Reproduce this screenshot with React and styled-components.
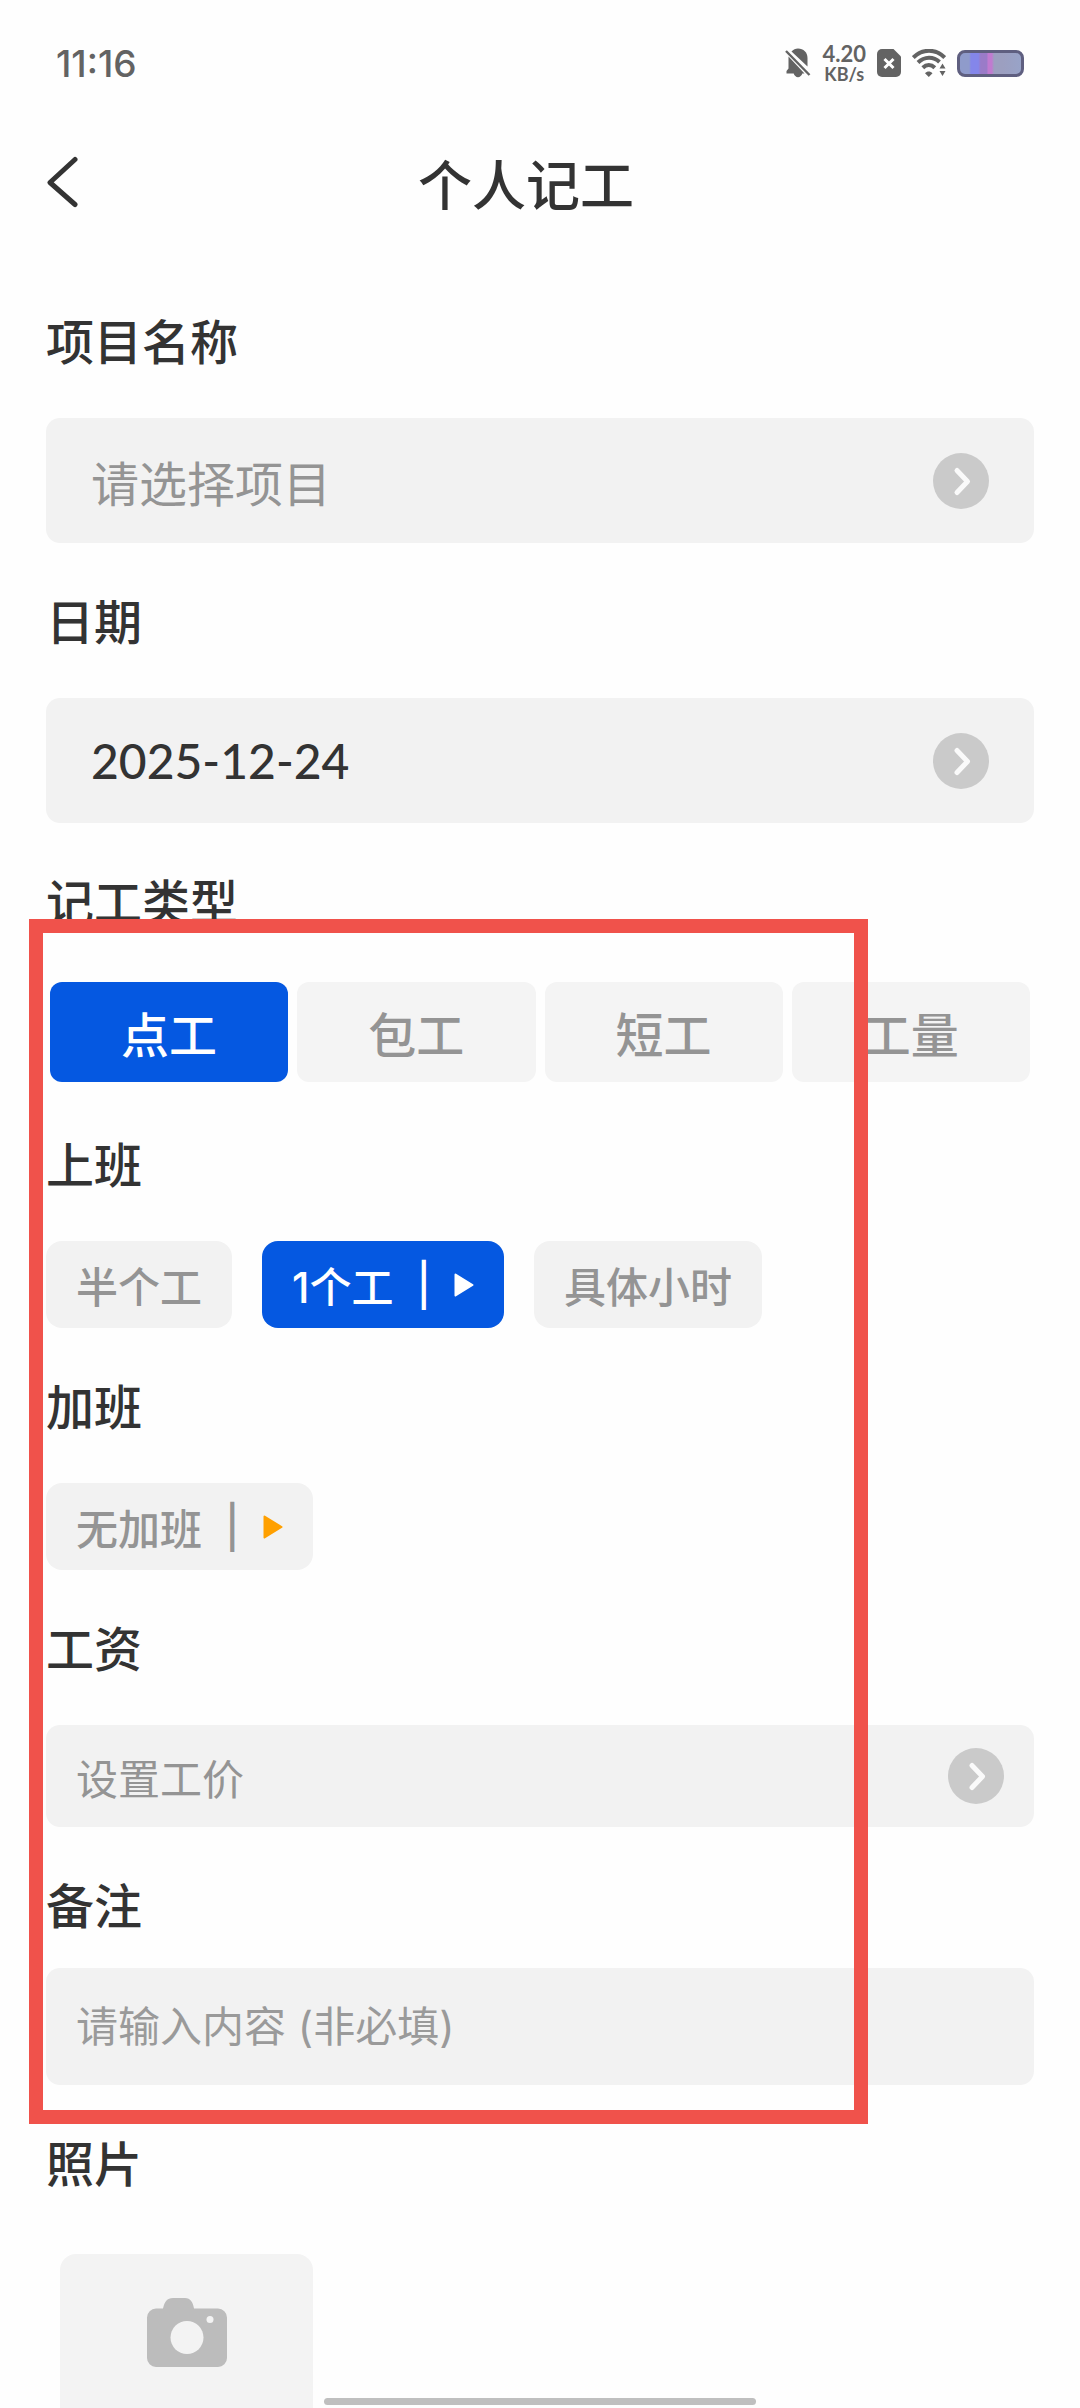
import React, { useState } from "react";
import styled, { createGlobalStyle } from "styled-components";

const workTypes = ["点工", "包工", "短工", "工量"];
const shifts = [
  { label: "半个工" },
  { label: "1个工", more: true },
  { label: "具体小时" },
];

const StatusIcons = () => (
  <StatusRight>
    <svg width="26" height="30" viewBox="0 0 26 30" fill="#636363">
      <path d="M13 0.5c5.500 0 9.500 4 9.500 9.500v8.500L6.500 3.500C8.300 1.500 10.500 .5 13 .5z" />
      <path d="M3.500 8.500L19.500 25.500H17.300c-.6 2-2.300 3.700-4.300 3.700s-3.700-1.700-4.300-3.700H1.500v-2.500l2-2.500z" />
      <path d="M1 3L24.500 27" stroke="#636363" strokeWidth="2.400" />
    </svg>
    <Speed>
      <SpeedValue>4.20</SpeedValue>
      <SpeedUnit>KB/s</SpeedUnit>
    </Speed>
    <svg width="24" height="28" viewBox="0 0 24 28">
      <path
        d="M5 0h11.500L24 7.500V23a5 5 0 0 1-5 5H5a5 5 0 0 1-5-5V5a5 5 0 0 1 5-5z"
        fill="#636363"
      />
      <path
        d="M7.500 10L16.500 19M16.500 10L7.500 19"
        stroke="#fff"
        strokeWidth="3"
      />
    </svg>
    <svg width="34" height="28" viewBox="0 0 34 28" fill="none">
      <g stroke="#636363" strokeWidth="4">
        <path d="M1.300 8.500C10.500-.5 23.500-.5 32.700 8.500" />
        <path d="M6 13.500c6.500-6.300 15.500-6.300 21.500-.5" />
        <path d="M10.800 18.700c3.700-3.600 8.300-3.600 12 0" />
      </g>
      <path
        d="M13 24.300c2.200-2.300 5.300-2.300 7.500 0L16.800 28zM27.500 19.500L30.500 14.500 33.500 19.500zM27.500 22L30.500 27 33.500 22z"
        fill="#636363"
      />
    </svg>
    <Battery />
  </StatusRight>
);

const CircleArrow = () => (
  <svg width="56" height="56" viewBox="0 0 56 56" fill="none">
    <circle cx="28" cy="28" r="28" fill="#cacaca" />
    <path
      d="M24 17.500L34.500 28.500 24 39.500"
      stroke="#fafafa"
      strokeWidth="5"
      strokeLinecap="round"
      strokeLinejoin="round"
    />
  </svg>
);

const Triangle = ({ color }) => (
  <svg width="20" height="24" viewBox="0 0 20 24">
    <path
      d="M1.500 1.500L18.500 12 1.500 22.500z"
      fill={color}
      stroke={color}
      strokeWidth="2"
      strokeLinejoin="round"
    />
  </svg>
);

const CameraIcon = () => (
  <svg width="80" height="70" viewBox="0 0 80 70">
    <path
      d="M9 10.500H16C17.500 4 20 0 26 0H38C43.500 0 46 4.500 47 10.500H71a9 9 0 0 1 9 9V60a9 9 0 0 1-9 9H9a9 9 0 0 1-9-9V19.500a9 9 0 0 1 9-9z"
      fill="#bcbcbc"
    />
    <circle cx="40" cy="39.500" r="16.500" fill="#f3f3f3" />
    <circle cx="63" cy="21.500" r="3.500" fill="#f3f3f3" />
  </svg>
);

const App = () => {
  const [workType, setWorkType] = useState("点工");
  const [shift, setShift] = useState("1个工");
  const [remark, setRemark] = useState("");

  return (
    <Screen>
      <GlobalStyle />
      <StatusBar>
        <Time>11:16</Time>
        <StatusIcons />
      </StatusBar>

      <Header>
        <BackButton aria-label="返回">
          <svg width="32" height="52" viewBox="0 0 32 52" fill="none">
            <path
              d="M29 3.500L4 26.500 29 48.500"
              stroke="#333"
              strokeWidth="5"
              strokeLinecap="round"
              strokeLinejoin="round"
            />
          </svg>
        </BackButton>
        <Title>个人记工</Title>
      </Header>

      <Form>
        <Section>
          <Label id="project-label">项目名称</Label>
          <PickerField $placeholder aria-labelledby="project-label">
            请选择项目
            <CircleArrow />
          </PickerField>
        </Section>

        <Section>
          <Label id="date-label">日期</Label>
          <PickerField aria-labelledby="date-label">
            2025-12-24
            <CircleArrow />
          </PickerField>
        </Section>

        <Marked>
          <Section>
            <Label id="type-label">记工类型</Label>
            <Tabs role="group" aria-labelledby="type-label">
              {workTypes.map((type) => (
                <Tab
                  key={type}
                  $active={type === workType}
                  aria-pressed={type === workType}
                  onClick={() => setWorkType(type)}
                >
                  {type}
                </Tab>
              ))}
            </Tabs>
          </Section>

          <Section>
            <Label id="shift-label">上班</Label>
            <Pills role="group" aria-labelledby="shift-label">
              {shifts.map(({ label, more }) => (
                <Pill
                  key={label}
                  $active={label === shift}
                  aria-pressed={label === shift}
                  onClick={() => setShift(label)}
                >
                  <span>{label}</span>
                  {more && <span>|</span>}
                  {more && (
                    <Triangle color={label === shift ? "#fff" : "#ffa000"} />
                  )}
                </Pill>
              ))}
            </Pills>
          </Section>

          <Section>
            <Label id="overtime-label">加班</Label>
            <Pills role="group" aria-labelledby="overtime-label">
              <Pill>
                <span>无加班</span>
                <span>|</span>
                <Triangle color="#ffa000" />
              </Pill>
            </Pills>
          </Section>

          <Section>
            <Label id="wage-label">工资</Label>
            <PickerField $compact $placeholder aria-labelledby="wage-label">
              设置工价
              <CircleArrow />
            </PickerField>
          </Section>

          <Section $tight>
            <Label as="label" htmlFor="remark">
              备注
            </Label>
            <RemarkInput
              id="remark"
              placeholder="请输入内容 (非必填)"
              value={remark}
              onChange={(e) => setRemark(e.target.value)}
            />
          </Section>
          <Frame />
        </Marked>

        <Section>
          <Label>照片</Label>
          <PhotoButton aria-label="添加照片">
            <CameraIcon />
          </PhotoButton>
        </Section>
      </Form>

      <HomeIndicator />
    </Screen>
  );
};

const GlobalStyle = createGlobalStyle`
  * {
    box-sizing: border-box;
  }

  body {
    margin: 0;
    background: #fefefe;
    color: #333;
    font-family: Inter, "Noto Sans CJK SC", sans-serif;
  }

  button,
  input {
    border: none;
    padding: 0;
    margin: 0;
    color: inherit;
    font-family: inherit;
  }

  button {
    cursor: pointer;
  }

  svg {
    display: block;
    flex-shrink: 0;
  }
`;

const Screen = styled.div`
  position: relative;
  display: flex;
  flex-direction: column;
  height: 100vh;
  overflow: hidden;
`;

const StatusBar = styled.div`
  display: flex;
  flex-shrink: 0;
  align-items: center;
  justify-content: space-between;
  height: 126px;
  padding: 0 56px;
  color: #636363;
`;

const Time = styled.span`
  font-size: 37px;
  font-weight: 500;
`;

const StatusRight = styled.div`
  display: flex;
  align-items: center;
  gap: 11px;
`;

const Speed = styled.div`
  display: flex;
  flex-direction: column;
  align-items: center;
  font-family: Lato, sans-serif;
  font-weight: 700;
`;

const SpeedValue = styled.span`
  font-size: 22px;
  line-height: 22px;
`;

const SpeedUnit = styled.span`
  font-size: 18px;
  line-height: 18px;
`;

const Battery = styled.div`
  width: 67px;
  height: 27px;
  border: 3px solid #5f5f80;
  border-radius: 8px;
  background: linear-gradient(
    90deg,
    #8f9bcb 0 15%,
    #8486ea 18% 30%,
    #9a7bc8 34% 44%,
    #c07bd0 46% 52%,
    #9c9fc0 56% 70%,
    #98a3c8 100%
  );
`;

const Header = styled.header`
  display: flex;
  flex-shrink: 0;
  align-items: center;
  height: 112px;
  padding: 0 106px 0 46px;
`;

const BackButton = styled.button`
  background: none;
`;

const Title = styled.h1`
  flex: 1;
  margin: 0;
  font-size: 54px;
  font-weight: 500;
  text-align: center;
`;

const Form = styled.main`
  display: flex;
  flex: 1;
  flex-direction: column;
  gap: 46px;
  min-height: 0;
  padding: 71px 46px 0;
  overflow-y: auto;
  scrollbar-width: none;
`;

const Section = styled.section`
  display: flex;
  flex-direction: column;
  flex-shrink: 0;
  gap: ${({ $tight }) => ($tight ? "27px" : "41px")};
`;

const Label = styled.h2`
  margin: 0;
  font-size: 48px;
  font-weight: 500;
  line-height: 68px;
`;

const PickerField = styled.button`
  display: flex;
  align-items: center;
  justify-content: space-between;
  width: 100%;
  height: ${({ $compact }) => ($compact ? "102px" : "125px")};
  padding: 0 ${({ $compact }) => ($compact ? "30px" : "45px")};
  border-radius: 14px;
  background: #f2f2f2;
  color: ${({ $placeholder }) => ($placeholder ? "#949494" : "#333")};
  font-family: Lato, "Noto Sans CJK SC", sans-serif;
  font-size: ${({ $compact }) => ($compact ? "42px" : "48px")};
  font-weight: ${({ $placeholder }) => ($placeholder ? 400 : 500)};
`;

const Marked = styled.div`
  position: relative;
  display: flex;
  flex-shrink: 0;
  flex-direction: column;
  gap: 46px;
`;

/* red highlight lying over the marked part of the form */
const Frame = styled.div`
  position: absolute;
  top: 50px;
  right: 166px;
  bottom: -39px;
  left: -17px;
  border: 14px solid #f0524b;
  pointer-events: none;
`;

const Tabs = styled.div`
  display: grid;
  grid-template-columns: repeat(4, 1fr);
  gap: 9px;
  padding: 4px;
`;

const Tab = styled.button`
  height: 100px;
  border-radius: 12px;
  background: ${({ $active }) => ($active ? "#0558e1" : "#f4f4f4")};
  color: ${({ $active }) => ($active ? "#fff" : "#949494")};
  font-size: 48px;
  font-weight: 500;
`;

const Pills = styled.div`
  display: flex;
  gap: 30px;
`;

const Pill = styled.button`
  display: flex;
  align-items: center;
  gap: 23px;
  height: 87px;
  padding: 0 30px;
  border-radius: 16px;
  background: ${({ $active }) => ($active ? "#0558e1" : "#f2f2f2")};
  color: ${({ $active }) => ($active ? "#fff" : "#949494")};
  font-size: 42px;
  font-weight: 500;
`;

const RemarkInput = styled.input`
  width: 100%;
  height: 117px;
  padding: 0 30px;
  border-radius: 14px;
  background: #f2f2f2;
  font-size: 42px;

  &::placeholder {
    color: #9a9a9a;
    opacity: 1;
  }
`;

const PhotoButton = styled.button`
  display: flex;
  justify-content: center;
  width: 253px;
  height: 253px;
  margin: 14px;
  padding-top: 44px;
  border-radius: 16px;
  background: #f3f3f3;
`;

const HomeIndicator = styled.div`
  position: absolute;
  bottom: 3px;
  left: 30%;
  width: 40%;
  height: 7px;
  border-radius: 4px;
  background: #bfbfbf;
`;

export default App;
